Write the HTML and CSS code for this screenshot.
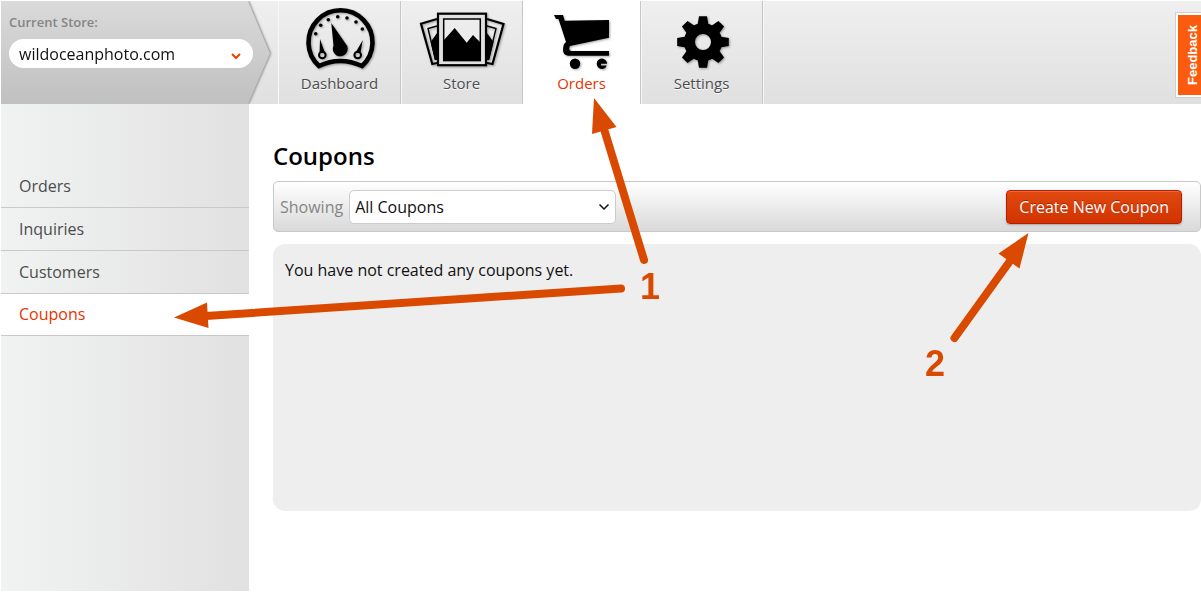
FILE: index.html
```
<!DOCTYPE html>
<html lang="en">
<head>
    <meta charset="UTF-8">
    <meta name="viewport" content="width=device-width, initial-scale=1.0">
    <title>Coupons</title>
    <link rel="stylesheet" href="styles.css">
</head>
<body>
    <header class="header">
        <div class="store-shadow">
            <div class="store">
                <label class="store-label" for="store">Current Store:</label>
                <div class="select-wrap">
                    <select class="store-select" id="store">
                        <option>wildoceanphoto.com</option>
                    </select>
                    <svg class="store-arrow" viewBox="0 0 10 8" aria-hidden="true"><path d="M1 2l4 4 4-4"/></svg>
                </div>
            </div>
        </div>
        <nav class="nav">
            <a href="#" class="nav-item">
                <svg class="nav-icon" width="72" height="64" viewBox="0 0 72 64" aria-hidden="true">
                    <path d="M15 59A32 32 0 1 1 58 59Q36 49 15 59Z" fill="none" stroke="#000" stroke-width="4.6"/>
                    <circle cx="11.7" cy="26.7" r="1.8"/>
                    <circle cx="16.7" cy="18.3" r="1.8"/>
                    <circle cx="24.3" cy="12.7" r="1.8"/>
                    <circle cx="33.7" cy="9.7" r="1.8"/>
                    <circle cx="43" cy="11" r="1.8"/>
                    <circle cx="52" cy="15" r="1.8"/>
                    <circle cx="58.3" cy="22" r="1.8"/>
                    <path d="M27.3 16L41.5 36.5A7.5 7.5 0 1 1 29.5 38.5Z"/>
                    <path d="M16 32L20.8 45.5H15.6ZM58.8 33L51.6 45.5H56.5Z"/>
                    <circle cx="18.3" cy="48" r="3.3" fill="none" stroke="#000" stroke-width="2"/>
                    <circle cx="53.7" cy="48" r="3.3" fill="none" stroke="#000" stroke-width="2"/>
                </svg>
                <span>Dashboard</span>
            </a>
            <a href="#" class="nav-item">
                <svg class="nav-icon" width="88" height="64" viewBox="0 -3 88 64" aria-hidden="true">
                    <path d="M19 9L3 13.8 14.3 54 19 53M69 9L85.5 14 74.5 54 69 53" fill="none" stroke="#000" stroke-width="2.2"/>
                    <path d="M19 16L10 18.5 17.5 50M69 16L78 18.5 70.5 50" fill="none" stroke="#000" stroke-width="1.4"/>
                    <path d="M12.7 32L19 23V50H17ZM69 23L75.5 32 71 50H69Z"/>
                    <rect x="20" y="3.7" width="48" height="51.5" fill="#e0e0e0" stroke="#000" stroke-width="2.2"/>
                    <rect x="25.7" y="9" width="36.6" height="41.6" fill="#ececec" stroke="#000" stroke-width="1.5"/>
                    <path d="M26 30L36.7 18 48.7 32.7 55 25 62 32V50.5H26Z"/>
                </svg>
                <span>Store</span>
            </a>
            <a href="#" class="nav-item active">
                <svg class="nav-icon" width="60" height="64" viewBox="0 -5 60 64" aria-hidden="true">
                    <path d="M2 3H11L12.7 8.7 57 8V25.7L18 34Q16 38 19 39H57V43.7H16Q11 43 11 38 11 32 14 30L6.5 7H4Z"/>
                    <circle cx="23" cy="51.7" r="5.2"/>
                    <path d="M54.8 50A5.2 5.2 0 1 0 54.8 53.4H49V51.8H55Z"/>
                </svg>
                <span>Orders</span>
            </a>
            <a href="#" class="nav-item">
                <svg class="nav-icon" width="64" height="64" viewBox="-33 -35 64 64" aria-hidden="true">
                    <defs><path id="tooth" d="M-5.5 -17L-4 -25.8H4L5.5 -17Z"/></defs>
                    <circle r="13.5" fill="none" stroke="#000" stroke-width="11"/>
                    <use href="#tooth"/>
                    <use href="#tooth" transform="rotate(45)"/>
                    <use href="#tooth" transform="rotate(90)"/>
                    <use href="#tooth" transform="rotate(135)"/>
                    <use href="#tooth" transform="rotate(180)"/>
                    <use href="#tooth" transform="rotate(225)"/>
                    <use href="#tooth" transform="rotate(270)"/>
                    <use href="#tooth" transform="rotate(315)"/>
                </svg>
                <span>Settings</span>
            </a>
        </nav>
    </header>

    <div class="page">
        <nav class="sidebar">
            <a href="#" class="side-link">Orders</a>
            <a href="#" class="side-link">Inquiries</a>
            <a href="#" class="side-link">Customers</a>
            <a href="#" class="side-link current">Coupons</a>
        </nav>
        <main class="content">
            <h1>Coupons</h1>
            <div class="toolbar">
                <label class="showing" for="filter">Showing</label>
                <div class="select-wrap">
                    <select class="filter" id="filter">
                        <option>All Coupons</option>
                    </select>
                    <svg class="filter-arrow" viewBox="0 0 12 8" aria-hidden="true"><path d="M1.5 1.5l4.5 4.5 4.5-4.5"/></svg>
                </div>
                <button type="button" class="create">Create New Coupon</button>
            </div>
            <div class="panel">
                <p>You have not created any coupons yet.</p>
            </div>
        </main>
    </div>

    <button type="button" class="feedback">Feedback</button>

    <!-- step arrows drawn over the page -->
    <svg class="steps" width="1201" height="592" viewBox="0 0 1201 592">
        <g class="shafts">
            <path d="M604 129L644 260"/>
            <path d="M206 316L621 288.5"/>
            <path d="M1010 261L954.5 338"/>
        </g>
        <path d="M594 98L616.5 127 592 134Z"/>
        <path d="M174 317.5L207 302.5 208.5 328Z"/>
        <path d="M1028.5 233L998.5 253.5 1019.5 268.5Z"/>
        <text x="640" y="299">1</text>
        <text x="925" y="376">2</text>
    </svg>
</body>
</html>
```
FILE: styles.css
```
* {
    box-sizing: border-box;
}
html {
    height: 100%;
}
body {
    position: relative;
    display: flex;
    flex-direction: column;
    min-height: 100%;
    margin: 0;
    padding: 1px 0 1px 1px;
    background: #fff;
    color: #111;
    font-family: "Open Sans", "Noto Sans", sans-serif;
    font-size: 16px;
    line-height: 20px;
    overflow-x: hidden;
}
a {
    text-decoration: none;
}
select,
button {
    font-family: inherit;
}

/* top bar */
.header {
    display: flex;
    background: linear-gradient(#efefef, #e0e0e0);
}
.store-shadow {
    flex: none;
    width: 277px;
    filter: drop-shadow(1px 0 1px #8a8a8a);
    clip-path: inset(0);
}
.store {
    width: 270px;
    height: 100%;
    padding: 11px 8px 0;
    background: linear-gradient(#dadada, #c0c0c0);
    clip-path: polygon(0 0, 247px 0, 269px 51%, 247px 100%, 0 100%);
}
.store-label {
    display: block;
    margin-bottom: 7px;
    color: #858585;
    font-size: 13px;
    font-weight: 600;
}
.select-wrap {
    position: relative;
    width: max-content;
}
.store-select {
    display: block;
    width: 244px;
    height: 29px;
    padding: 0 10px;
    border: 0;
    border-radius: 15px;
    background: #fff;
    color: #111;
    font-size: 16px;
    appearance: none;
}
.store-arrow,
.filter-arrow {
    position: absolute;
    fill: none;
    pointer-events: none;
}
.store-arrow {
    top: 13px;
    right: 12px;
    width: 10px;
    stroke: #f04000;
    stroke-width: 2;
}
.nav {
    display: flex;
    border-left: 1px solid #f8f8f8;
}
.nav-item {
    display: flex;
    flex-direction: column;
    align-items: center;
    width: 122px;
    padding: 6px 0 9px;
    border-right: 1px solid #c6c6c6;
    box-shadow: 1px 0 #f6f6f6;
    color: #4c4c4c;
    font-size: 15px;
    font-weight: 500;
    line-height: 24px;
    text-shadow: 0 1px #fff;
}
.nav-item.active {
    width: 118px;
    background: #fff;
    color: #e63300;
}
.nav-icon {
    display: block;
    filter: drop-shadow(1px 1px 1px rgba(0,0,0,0.35));
}
.feedback {
    position: absolute;
    top: 13px;
    right: 0;
    height: 84px;
    width: 25px;
    padding: 0 0 0 5px;
    border: 2px solid #fff;
    border-right: 0;
    outline: 1px solid #d0d0d0;
    background: #fa5b0f;
    color: #fff;
    font-family: "Liberation Sans", Arial, sans-serif;
    font-size: 13px;
    font-weight: bold;
    writing-mode: sideways-lr;
}

/* body */
.page {
    display: flex;
    flex: 1;
}
.sidebar {
    flex: none;
    width: 248px;
    padding-top: 61px;
    background: linear-gradient(90deg, #f0f3f2, #e7e7e7 65%, #e1e1e1);
}
.side-link {
    display: block;
    padding: 11px 18px;
    border-bottom: 1px solid #c9c9c9;
    color: #4c4c4c;
    line-height: 20px;
}
.side-link.current {
    padding-top: 10px;
    background: #fff;
    color: #e63300;
}
.content {
    flex: 1;
    min-width: 0;
    padding: 36px 0 0 24px;
}
h1 {
    margin: 0 0 9px;
    color: #000;
    font-size: 24px;
    font-weight: 600;
    line-height: 32px;
}
.toolbar {
    display: flex;
    align-items: center;
    gap: 6px;
    height: 51px;
    margin-bottom: 12px;
    padding: 0 18px 0 6px;
    border: 1px solid #c8c8c8;
    border-radius: 5px;
    background: linear-gradient(#fff, #d9d9d9);
}
.showing {
    color: #858585;
    font-size: 16px;
}
.filter {
    display: block;
    width: 267px;
    height: 34px;
    padding: 0 5px;
    border: 1px solid #ccc;
    border-radius: 5px;
    background: #fff;
    color: #111;
    font-size: 16px;
    appearance: none;
}
.filter-arrow {
    top: 13px;
    right: 6px;
    width: 12px;
    stroke: #111;
    stroke-width: 1.5;
}
.create {
    height: 34px;
    margin-left: auto;
    padding: 0 12px;
    border: 1px solid #b91c00;
    border-radius: 4px;
    background: linear-gradient(#e04a10, #d13300);
    box-shadow: inset 0 1px #ea6a3c, 0 1px 2px rgba(0,0,0,0.25);
    color: #fff;
    font-size: 16px;
    text-shadow: 0 -1px #b02000;
}
.panel {
    height: 267px;
    padding: 16px 12px;
    border-radius: 12px;
    background: #eee;
}
.panel p {
    margin: 0;
}

/* arrows */
.steps {
    position: absolute;
    top: 0;
    left: 0;
    fill: #d94900;
    pointer-events: none;
}
.shafts {
    fill: none;
    stroke: #d94900;
    stroke-width: 8;
    stroke-linecap: round;
}
.steps text {
    font-family: "Liberation Sans", Arial, sans-serif;
    font-size: 36px;
    font-weight: bold;
}
```
